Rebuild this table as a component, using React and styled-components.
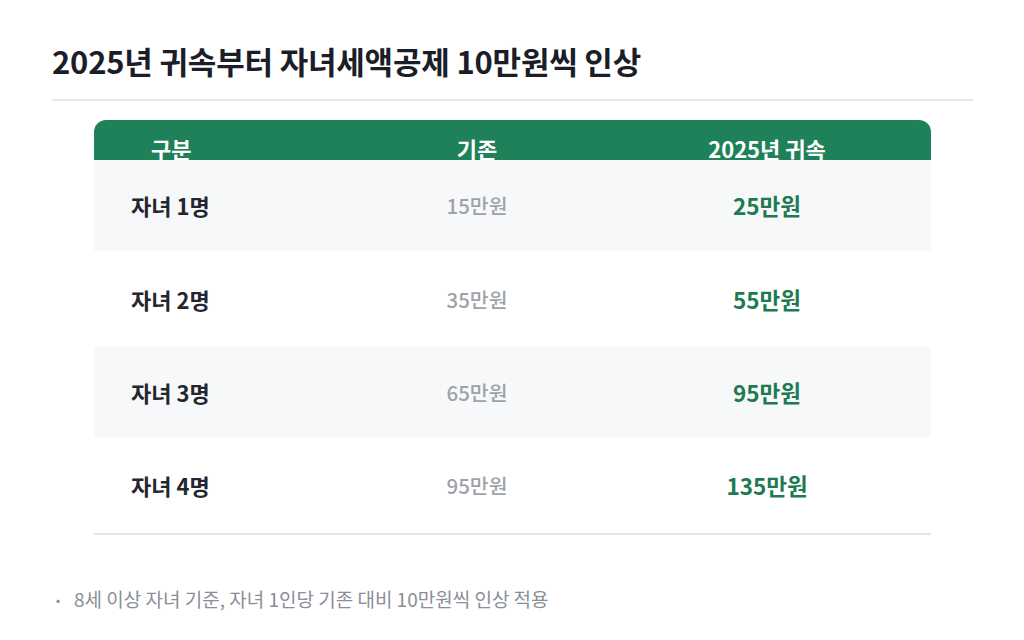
import React from 'react';
import styled, { createGlobalStyle } from 'styled-components';

const GlobalStyle = createGlobalStyle`
  body {
    margin: 0;
    background: #ffffff;
    font-family: "Noto Sans CJK KR", "Noto Sans", sans-serif;
  }
`;

const rows = [
  { label: '자녀 1명', before: '15만원', after: '25만원' },
  { label: '자녀 2명', before: '35만원', after: '55만원' },
  { label: '자녀 3명', before: '65만원', after: '95만원' },
  { label: '자녀 4명', before: '95만원', after: '135만원' },
];

const App = () => {
  return (
    <Page>
      <GlobalStyle />
      <Title>2025년 귀속부터 자녀세액공제 10만원씩 인상</Title>
      <Table>
        <HeadRow>
          <HeadCell $first>구분</HeadCell>
          <HeadCell>기존</HeadCell>
          <HeadCell>2025년 귀속</HeadCell>
        </HeadRow>
        {rows.map((r, i) => (
          <Row key={r.label} $shaded={i % 2 === 0}>
            <Label>{r.label}</Label>
            <Before>{r.before}</Before>
            <After>{r.after}</After>
          </Row>
        ))}
      </Table>
      <Note>
        <Dot>•</Dot>8세 이상 자녀 기준, 자녀 1인당 기존 대비 10만원씩 인상 적용
      </Note>
    </Page>
  );
};

const Page = styled.div`
  width: 921px;
  padding: 39px 0 0 52px;
`;

const Title = styled.h1`
  margin: 0;
  padding-bottom: 16px;
  border-bottom: 2px solid #e6e7e9;
  font-size: 31px;
  line-height: 44px;
  font-weight: 700;
  color: #1b1e29;
  letter-spacing: -0.2px;
`;

const Table = styled.div`
  margin: 19px 42px 0;
  border-bottom: 2px solid #e4e5e8;
`;

const columns = `257px 252px 328px`;

const HeadRow = styled.div`
  display: grid;
  grid-template-columns: ${columns};
  height: 40px;
  overflow: hidden;
  background: #1f8159;
  border-radius: 12px 12px 0 0;
`;

const HeadCell = styled.div`
  padding: 12px 0 0 ${(p) => (p.$first ? '57px' : '0')};
  text-align: ${(p) => (p.$first ? 'left' : 'center')};
  font-size: 22px;
  line-height: 32px;
  font-weight: 600;
  color: #ffffff;
`;

const Row = styled.div`
  display: grid;
  grid-template-columns: ${columns};
  align-items: center;
  height: ${(p) => (p.$shaded ? '90.5px' : '96px')};
  background: ${(p) => (p.$shaded ? '#f7f8fa' : '#ffffff')};
`;

const Label = styled.div`
  padding-left: 37px;
  font-size: 22px;
  font-weight: 700;
  color: #23262f;
`;

const Before = styled.div`
  text-align: center;
  font-size: 20.5px;
  font-weight: 500;
  color: #9ea2a9;
`;

const After = styled.div`
  text-align: center;
  font-size: 22.5px;
  font-weight: 700;
  color: #1e7a50;
`;

const Note = styled.p`
  margin: 51px 0 0 4px;
  font-size: 19px;
  line-height: 26px;
  color: #8a8e96;
`;

const Dot = styled.span`
  display: inline-block;
  width: 18px;
  font-size: 12px;
  vertical-align: 2px;
`;

export default App;
